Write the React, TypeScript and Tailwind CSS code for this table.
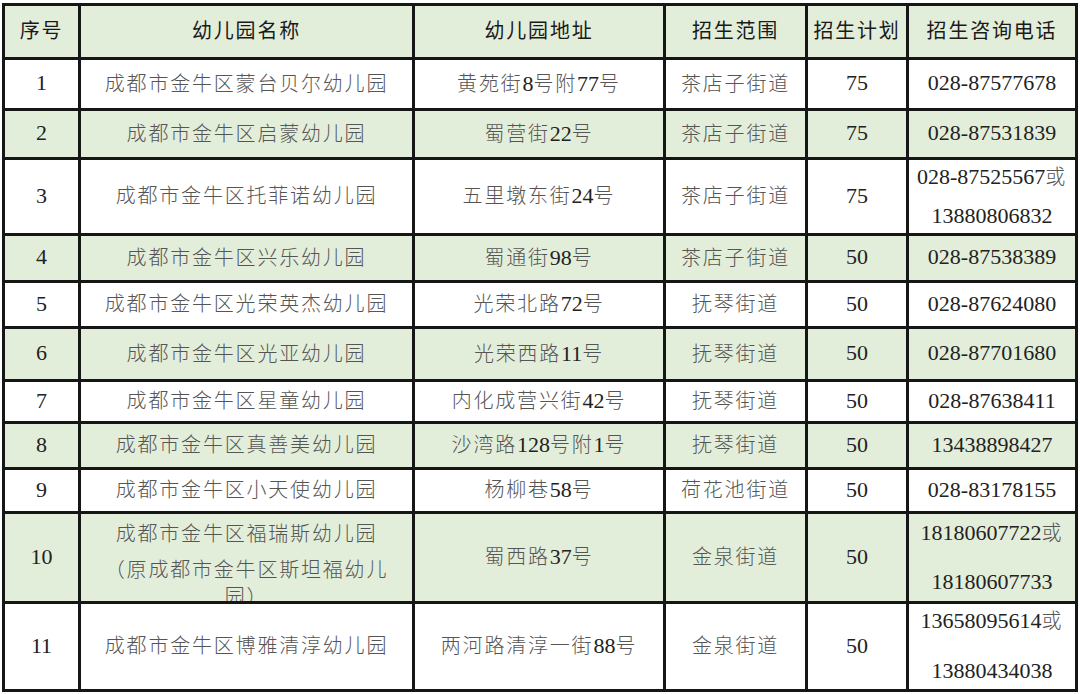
import React from "react";

type Row = {
  no: string;
  name: string[];
  addr: string;
  area: string;
  plan: string;
  phone: string[];
  green: boolean;
  nameTop?: boolean;
  lead?: string;
};

const rows: Row[] = [
  { no: "1", name: ["成都市金牛区蒙台贝尔幼儿园"], addr: "黄苑街8号附77号", area: "茶店子街道", plan: "75", phone: ["028-87577678"], green: false },
  { no: "2", name: ["成都市金牛区启蒙幼儿园"], addr: "蜀营街22号", area: "茶店子街道", plan: "75", phone: ["028-87531839"], green: true },
  { no: "3", name: ["成都市金牛区托菲诺幼儿园"], addr: "五里墩东街24号", area: "茶店子街道", plan: "75", phone: ["028-87525567或", "13880806832"], green: false, lead: "leading-[37px]" },
  { no: "4", name: ["成都市金牛区兴乐幼儿园"], addr: "蜀通街98号", area: "茶店子街道", plan: "50", phone: ["028-87538389"], green: true },
  { no: "5", name: ["成都市金牛区光荣英杰幼儿园"], addr: "光荣北路72号", area: "抚琴街道", plan: "50", phone: ["028-87624080"], green: false },
  { no: "6", name: ["成都市金牛区光亚幼儿园"], addr: "光荣西路11号", area: "抚琴街道", plan: "50", phone: ["028-87701680"], green: true },
  { no: "7", name: ["成都市金牛区星童幼儿园"], addr: "内化成营兴街42号", area: "抚琴街道", plan: "50", phone: ["028-87638411"], green: false },
  { no: "8", name: ["成都市金牛区真善美幼儿园"], addr: "沙湾路128号附1号", area: "抚琴街道", plan: "50", phone: ["13438898427"], green: true },
  { no: "9", name: ["成都市金牛区小天使幼儿园"], addr: "杨柳巷58号", area: "荷花池街道", plan: "50", phone: ["028-83178155"], green: false },
  { no: "10", name: ["成都市金牛区福瑞斯幼儿园", "（原成都市金牛区斯坦福幼儿", "园）"], addr: "蜀西路37号", area: "金泉街道", plan: "50", phone: ["18180607722或", "18180607733"], green: true, nameTop: true, lead: "leading-[47px]" },
  { no: "11", name: ["成都市金牛区博雅清淳幼儿园"], addr: "两河路清淳一街88号", area: "金泉街道", plan: "50", phone: ["13658095614或", "13880434038"], green: false, lead: "leading-[48px]" },
];

function Rich({ text, header = false }: { text: string; header?: boolean }) {
  const parts = text.split(/([\u3000-\u9fff\uff00-\uffef]+)/).filter((p) => p.length > 0);
  return (
    <>
      {parts.map((p, i) =>
        /[\u3000-\u9fff\uff00-\uffef]/.test(p) ? (
          header ? (
            <span key={i} className="font-['Noto_Sans_CJK_SC',sans-serif] text-[20px] tracking-[1.8px] text-[#1a1a1a] font-normal">
              {p}
            </span>
          ) : (
            <span key={i} className="font-['Noto_Sans_CJK_SC',sans-serif] text-[20px] tracking-[1.8px] text-[#555555] font-light">
              {p}
            </span>
          )
        ) : (
          <span key={i} className="font-['Liberation_Serif',serif] text-[22px] text-[#222222]">
            {p}
          </span>
        )
      )}
    </>
  );
}

function Cell({ green, children, top = false }: { green: boolean; children: React.ReactNode; top?: boolean }) {
  return (
    <div
      className={
        (green ? "bg-[#e3eeda] " : "bg-white ") +
        (top ? "flex flex-col items-center justify-start pt-[1px] " : "flex flex-col items-center justify-center ") +
        "overflow-hidden text-center whitespace-nowrap"
      }
    >
      {children}
    </div>
  );
}

export default function App() {
  const headers = ["序号", "幼儿园名称", "幼儿园地址", "招生范围", "招生计划", "招生咨询电话"];
  const nameBox = [
    "h-[36px] shrink-0 flex items-center justify-center leading-[30px]",
    "h-[36px] shrink-0 flex items-center justify-center leading-[30px]",
    "h-[18px] shrink-0 flex items-center justify-center leading-[18px]",
  ];
  return (
    <div className="w-[1080px] h-[694px] bg-white pt-[3px] pl-[2px] font-['Liberation_Serif','Noto_Sans_CJK_SC',serif]">
      <div className="grid w-fit bg-[#161616] p-[3px] gap-[3px] grid-cols-[73px_331px_248px_139px_98px_166px] grid-rows-[51px_48px_46px_73px_44px_43px_50px_39px_43px_41px_87px_85px]">
        {headers.map((h) => (
          <Cell key={h} green={true}>
            <div className="leading-[30px]">
              <Rich text={h} header />
            </div>
          </Cell>
        ))}
        {rows.map((r) => (
          <React.Fragment key={r.no}>
            <Cell green={r.green}>
              <div className="leading-[30px]">
                <Rich text={r.no} />
              </div>
            </Cell>
            <Cell green={r.green} top={r.nameTop}>
              {r.name.map((n, i) => (
                <div key={i} className={r.nameTop ? nameBox[i] : "leading-[30px]"}>
                  <Rich text={n} />
                </div>
              ))}
            </Cell>
            <Cell green={r.green}>
              <div className="leading-[30px]">
                <Rich text={r.addr} />
              </div>
            </Cell>
            <Cell green={r.green}>
              <div className="leading-[30px]">
                <Rich text={r.area} />
              </div>
            </Cell>
            <Cell green={r.green}>
              <div className="leading-[30px]">
                <Rich text={r.plan} />
              </div>
            </Cell>
            <Cell green={r.green}>
              {r.phone.map((p, i) => (
                <div key={i} className={r.lead ? r.lead : "leading-[30px]"}>
                  <Rich text={p} />
                </div>
              ))}
            </Cell>
          </React.Fragment>
        ))}
      </div>
    </div>
  );
}
